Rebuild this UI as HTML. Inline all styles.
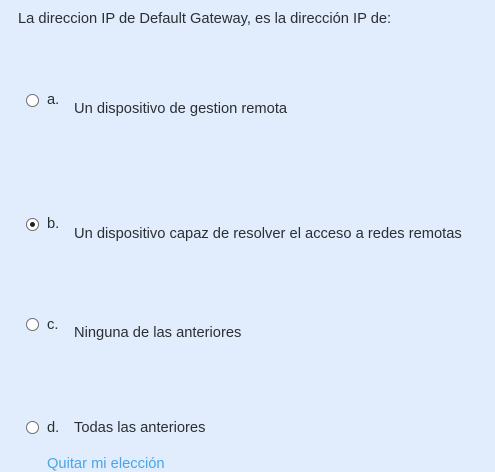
<!DOCTYPE html>
<html><head><meta charset="utf-8"><style>
body{margin:0;width:495px;height:472px;background:#e1edfd;font-family:"Liberation Sans",sans-serif;font-size:14.7px;color:#2b2f33;position:relative;overflow:hidden}
.a{position:absolute;white-space:nowrap;line-height:16px}
.r{position:absolute;width:11px;height:11px;border:1px solid #6e6e6e;border-radius:50%;background:#fff}
.r.s::after{content:"";position:absolute;left:3px;top:3px;width:5px;height:5px;border-radius:50%;background:#222}
</style></head><body>
<div class="a" style="left:18px;top:11px">La direccion IP de Default Gateway, es la dirección IP de:</div>

<div class="r" style="left:26px;top:94px"></div>
<div class="a" style="left:47px;top:92px">a.</div>
<div class="a" style="left:74px;top:101px">Un dispositivo de gestion remota</div>

<div class="r s" style="left:26px;top:218px"></div>
<div class="a" style="left:47px;top:216px">b.</div>
<div class="a" style="left:74px;top:226px">Un dispositivo capaz de resolver el acceso a redes remotas</div>

<div class="r" style="left:26px;top:318px"></div>
<div class="a" style="left:47px;top:317px">c.</div>
<div class="a" style="left:74px;top:325px">Ninguna de las anteriores</div>

<div class="r" style="left:26px;top:421px"></div>
<div class="a" style="left:47px;top:420px">d.</div>
<div class="a" style="left:74px;top:420px">Todas las anteriores</div>

<div class="a" style="left:47px;top:456px;color:#4aa5e8">Quitar mi elección</div>
</body></html>
